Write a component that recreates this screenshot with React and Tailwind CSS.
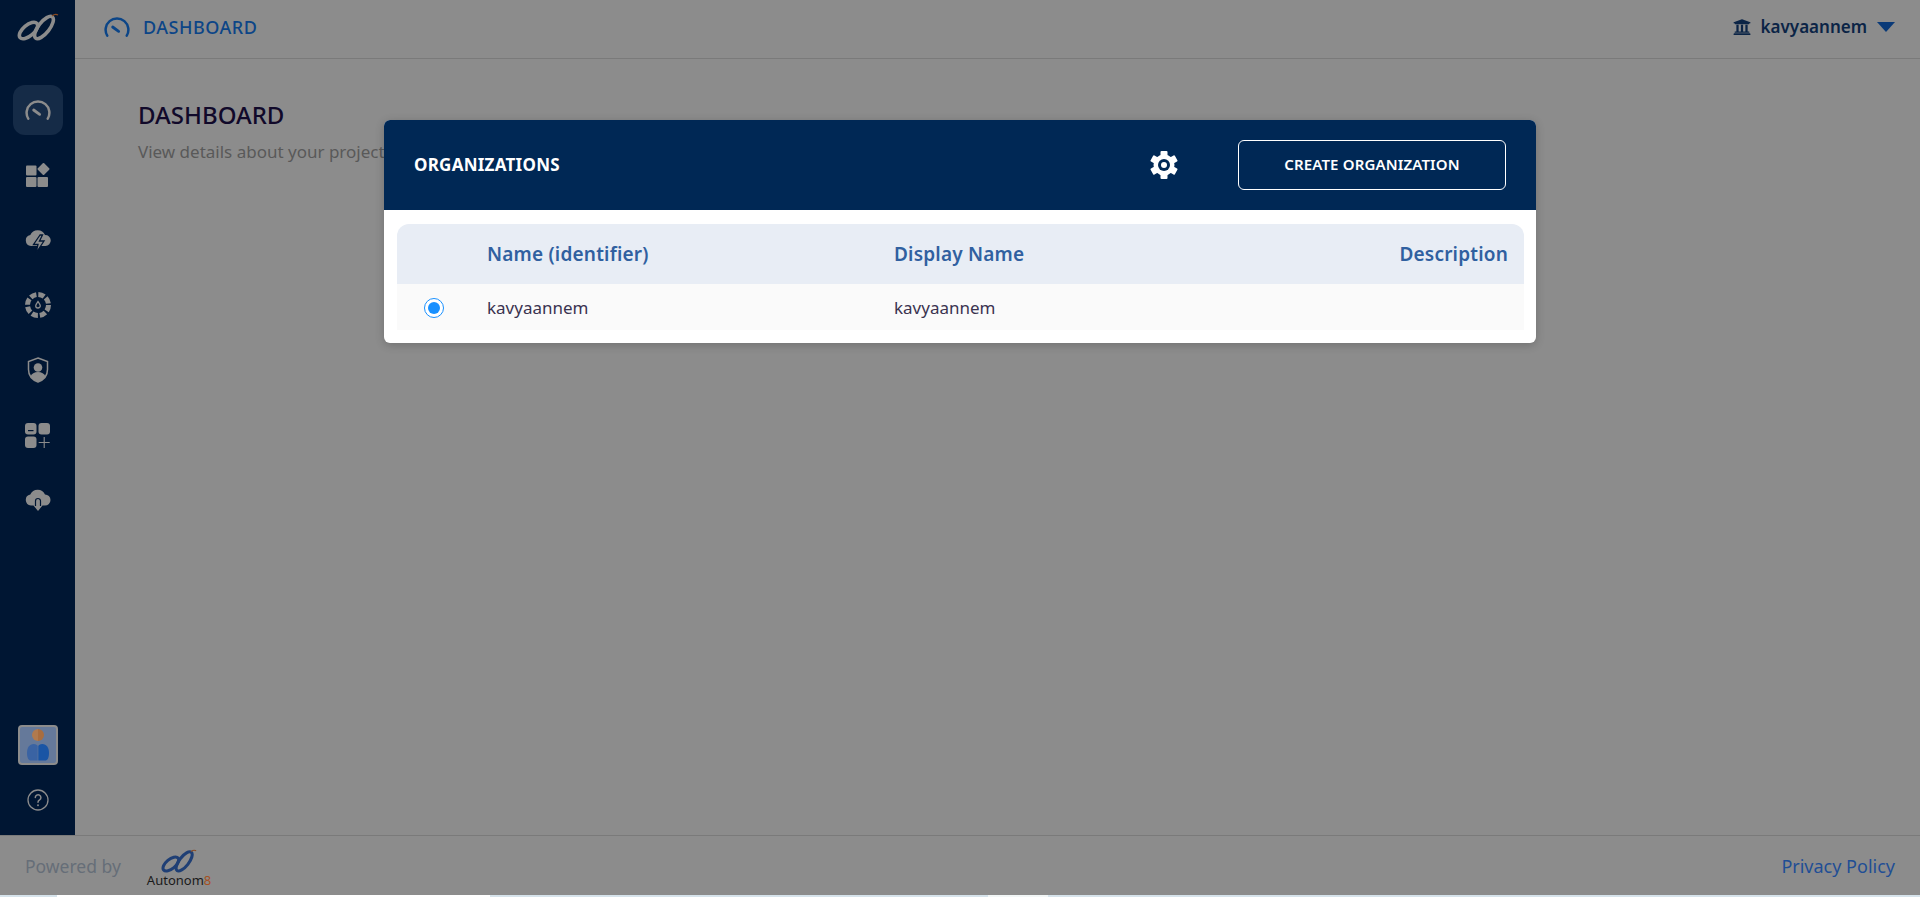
import { FaUniversity } from "react-icons/fa";

const font = { fontFamily: '"Noto Sans", sans-serif' };

function Logo({ className, stroke = "#8c8c8c", tip = "#8a4a20" }) {
  return (
    <svg viewBox="0 0 42 28" className={className} fill="none">
      <ellipse cx="11.5" cy="17.5" rx="11" ry="5.500" transform="rotate(-40 11.5 17.5)" stroke={stroke} strokeWidth="3.600" />
      <ellipse cx="27" cy="14.5" rx="13.500" ry="5.500" transform="rotate(-52 27 14.5)" stroke={stroke} strokeWidth="3.600" />
      <path d="M35 3c2-1.600 4-2 6-1" stroke={tip} strokeWidth="1.300" />
    </svg>
  );
}

function Gauge({ className }) {
  return (
    <svg viewBox="0 0 24 20" className={className} fill="none" stroke="currentColor" strokeWidth="2.300" strokeLinecap="round">
      <path d="M3 18A10.500 10.500 0 1 1 21 18" />
      <path d="M8 10l5.500 4" strokeWidth="2.600" />
    </svg>
  );
}

function Gear() {
  const teeth = [0, 60, 120, 180, 240, 300];
  return (
    <svg viewBox="0 0 28 28" className="ml-auto mr-[60px] w-[28px] h-[28px]">
      {teeth.map((a) => (
        <rect key={a} x="10.500" y="0" width="7" height="7" rx="1" fill="#fff" transform={`rotate(${a} 14 14)`} />
      ))}
      <circle cx="14" cy="14" r="10.500" fill="#fff" />
      <circle cx="14" cy="14" r="6" fill="#002855" />
      <circle cx="14" cy="14" r="3" fill="#fff" />
    </svg>
  );
}

function Apps() {
  return (
    <svg viewBox="0 0 24 24" className="w-[24px] h-[24px]" fill="#8c8c8c">
      <rect x="0" y="2.500" width="10.500" height="10" rx="1" />
      <rect x="0" y="14" width="10.500" height="10" rx="1" />
      <rect x="11.500" y="14" width="10.500" height="10" rx="1" />
      <rect x="13" y="1.500" width="9" height="9" rx="1" transform="rotate(45 17.500 6)" />
    </svg>
  );
}

function CloudBolt() {
  return (
    <svg viewBox="0 0 26 24" className="mt-[2px] w-[26px] h-[24px]">
      <path fill="#8c8c8c" d="M6 17a5.500 5.500 0 0 1-.7-10.900A8 8 0 0 1 20 6a5.500 5.500 0 0 1 .5 11z" />
      <path fill="#8c8c8c" stroke="#001633" strokeWidth="1.300" d="M15 6l-6.500 9.500h4.500l-2 8.500 8-12h-4.500l3-6z" />
    </svg>
  );
}

function Wheel() {
  return (
    <svg viewBox="0 0 26 26" className="w-[26px] h-[26px]">
      <circle cx="13" cy="13" r="10.500" fill="none" stroke="#8c8c8c" strokeWidth="5" strokeDasharray="6.250 2" />
      <path fill="none" stroke="#8c8c8c" strokeWidth="1.300" d="M13 9.500c-1.500 2-2.300 3-2.300 4.200a2.300 2.300 0 0 0 4.600 0c0-1.200-.8-2.200-2.300-4.200z" />
    </svg>
  );
}

function ShieldUser() {
  return (
    <svg viewBox="0 0 22 26" className="w-[22px] h-[26px]">
      <path fill="none" stroke="#8c8c8c" strokeWidth="1.500" d="M11 1l9.500 3.500v8c0 6-4 10.500-9.500 12.500C5.500 23 1.500 18.500 1.500 12.500v-8z" />
      <circle cx="11" cy="10.500" r="4.300" fill="#8c8c8c" />
      <path fill="#8c8c8c" d="M3.500 19.500c1-3 4-4.500 7.500-4.500s6.500 1.500 7.500 4.500c-1.500 2.500-4 4.300-7.500 5.500-3.500-1.200-6-3-7.500-5.500z" />
    </svg>
  );
}

function AppsAdd() {
  return (
    <svg viewBox="0 0 25 25" className="w-[25px] h-[25px]">
      <rect x="0" y="0" width="11.500" height="11.500" rx="3" fill="#8c8c8c" />
      <rect x="3" y="7" width="5.500" height="1.200" fill="#001633" />
      <rect x="13.500" y="0" width="11.500" height="11.500" rx="3" fill="#8c8c8c" />
      <rect x="0" y="13.500" width="11.500" height="11.500" rx="3" fill="#8c8c8c" />
      <path d="M19.200 14v11M13.700 19.500h11" stroke="#8c8c8c" strokeWidth="1.100" />
    </svg>
  );
}

function CloudDown() {
  return (
    <svg viewBox="0 0 26 24" className="w-[26px] h-[24px]">
      <path fill="#8c8c8c" d="M6 17.500a5.500 5.500 0 0 1-.7-10.900A8 8 0 0 1 20 6.500a5.500 5.500 0 0 1 0 11h-2.500L13 23l-4.500-5.500z" />
      <path fill="none" stroke="#001633" strokeWidth="1.200" d="M10.500 18v-5a2.500 2.500 0 0 1 5 0v5" />
    </svg>
  );
}

function Help() {
  return (
    <svg viewBox="0 0 22 22" className="w-[22px] h-[22px]" fill="none" stroke="#8c8c8c" strokeWidth="1.300" strokeLinecap="round">
      <circle cx="11" cy="11" r="10" />
      <path d="M8.300 8.500a2.800 2.800 0 1 1 4.300 2.400c-1 .6-1.600 1.100-1.600 2.300" strokeWidth="1.500" />
      <path d="M11 16.200v.1" strokeWidth="1.800" />
    </svg>
  );
}

function Avatar() {
  return (
    <div className="w-[40px] h-[40px] rounded-[4px] border-[2px] border-[#8c8c8c] bg-[#65799a] flex items-center justify-center">
      <svg viewBox="0 0 24 32" className="w-[24px] h-[32px]">
        <path fill="#b07a4e" d="M12 0a6 6 0 0 0 0 12z" />
        <path fill="#a86d3f" d="M12 0a6 6 0 0 1 0 12z" />
        <path fill="#3a63a3" d="M11.700 17c-.5-1-1.700-2-4-2C3.500 15 1 18.500 1 24c0 5 1.500 7.500 4 7.500h6.700z" />
        <path fill="#1a55a5" d="M12.300 17c.5-1 1.700-2 4-2 4.200 0 6.700 3.500 6.700 9 0 5-1.500 7.500-4 7.500h-6.700z" />
      </svg>
    </div>
  );
}

export default function App() {
  return (
    <div className="relative w-[1920px] h-[897px] overflow-hidden flex flex-col bg-[#8c8c8c]" style={font}>
      <div className="flex flex-1 min-h-0">
        <aside className="w-[75px] bg-[#001633] flex flex-col items-center">
          <div className="h-[85px] w-full pt-[13px] flex justify-center">
            <Logo className="w-[42px] h-[28px]" />
          </div>
          <nav className="flex flex-col gap-[15px]">
            <div className="w-[50px] h-[50px] rounded-[12px] bg-[#152b47] flex items-center justify-center text-[#8c8c8c]">
              <Gauge className="w-[26px] h-[22px]" />
            </div>
            {[Apps, CloudBolt, Wheel, ShieldUser, AppsAdd, CloudDown].map((Icon, i) => (
              <div key={i} className="w-[50px] h-[50px] flex items-center justify-center">
                <Icon />
              </div>
            ))}
          </nav>
          <div className="mt-auto flex flex-col items-center gap-[24px] pb-[24px]">
            <Avatar />
            <Help />
          </div>
        </aside>

        <div className="flex-1 flex flex-col">
          <header className="h-[59px] border-b border-[#7a7a7a] flex items-center pl-[29px] pr-[25px] pb-[4px]">
            <Gauge className="w-[26px] h-[22px] text-[#0c4587]" />
            <span className="ml-[13px] text-[18px] tracking-[0.5px] font-medium text-[#0c4587]">DASHBOARD</span>
            <div className="ml-auto flex items-center text-[#0b2446]">
              <FaUniversity className="w-[18px] h-[18px]" />
              <span className="ml-[10px] text-[17px] font-semibold">kavyaannem</span>
              <svg viewBox="0 0 18 10" className="ml-[10px] w-[18px] h-[10px]">
                <path d="M0 0h18l-9 10z" fill="#0a3a78" />
              </svg>
            </div>
          </header>
          <main className="pl-[63px] pt-[40px]">
            <h1 className="text-[24px] leading-[32px] font-medium text-[#11092a]">DASHBOARD</h1>
            <p className="mt-[9px] text-[17px] leading-[24px] text-[#595959]">View details about your projects</p>
          </main>
        </div>
      </div>

      <footer className="h-[60px] border-t border-[#7a7a7a] flex items-center pl-[25px] pr-[25px]">
        <span className="mt-[2px] text-[17.500px] text-[#666e78]">Powered by</span>
        <div className="ml-[26px] mt-[4px] flex flex-col items-center">
          <Logo className="w-[38px] h-[24px]" stroke="#1f3f75" tip="#8a4a20" />
          <span className="text-[13px] leading-[14px] text-[#1a1a1a]">
            Autonom<span className="text-[#a5501f]">8</span>
          </span>
        </div>
        <span className="ml-auto mt-[2px] text-[18px] text-[#1f4e95]">Privacy Policy</span>
      </footer>

      <div className="h-[2px] flex bg-[#d6e3eb]">
        <div className="ml-[57px] w-[433px] bg-white" />
        <div className="ml-[498px] w-[60px] bg-[#f2f6f6]" />
      </div>

      <div className="absolute left-[384px] top-[120px] w-[1152px] h-[223px] rounded-[6px] bg-white shadow-[0_2px_10px_rgba(0,0,0,0.2)] overflow-hidden">
        <div className="h-[90px] bg-[#002855] flex items-center pl-[30px] pr-[30px] text-white">
          <span className="text-[17px] tracking-[0.25px] font-bold">ORGANIZATIONS</span>
          <Gear />
          <button className="w-[268px] h-[50px] pb-[2px] border border-white rounded-[6px] text-[15px] tracking-[0.15px] font-semibold">
            CREATE ORGANIZATION
          </button>
        </div>
        <div className="ml-[13px] mr-[12px] mt-[14px]">
          <div className="h-[60px] rounded-t-[12px] bg-[#e8edf5] grid grid-cols-[90px_407px_1fr] items-center text-[19px] tracking-[0.2px] font-semibold text-[#3060a0]">
            <span />
            <span>Name (identifier)</span>
            <div className="flex justify-between pr-[16px]">
              <span>Display Name</span>
              <span>Description</span>
            </div>
          </div>
          <div className="h-[46px] pt-[1px] bg-[#fafafa] grid grid-cols-[90px_407px_1fr] items-center text-[17px] text-[#3a3350]">
            <span className="pl-[27px]">
              <span className="w-[20px] h-[20px] rounded-full border border-[#1890ff] bg-white flex items-center justify-center">
                <span className="w-[12px] h-[12px] rounded-full bg-[#1890ff]" />
              </span>
            </span>
            <span>kavyaannem</span>
            <span>kavyaannem</span>
          </div>
        </div>
      </div>
    </div>
  );
}
